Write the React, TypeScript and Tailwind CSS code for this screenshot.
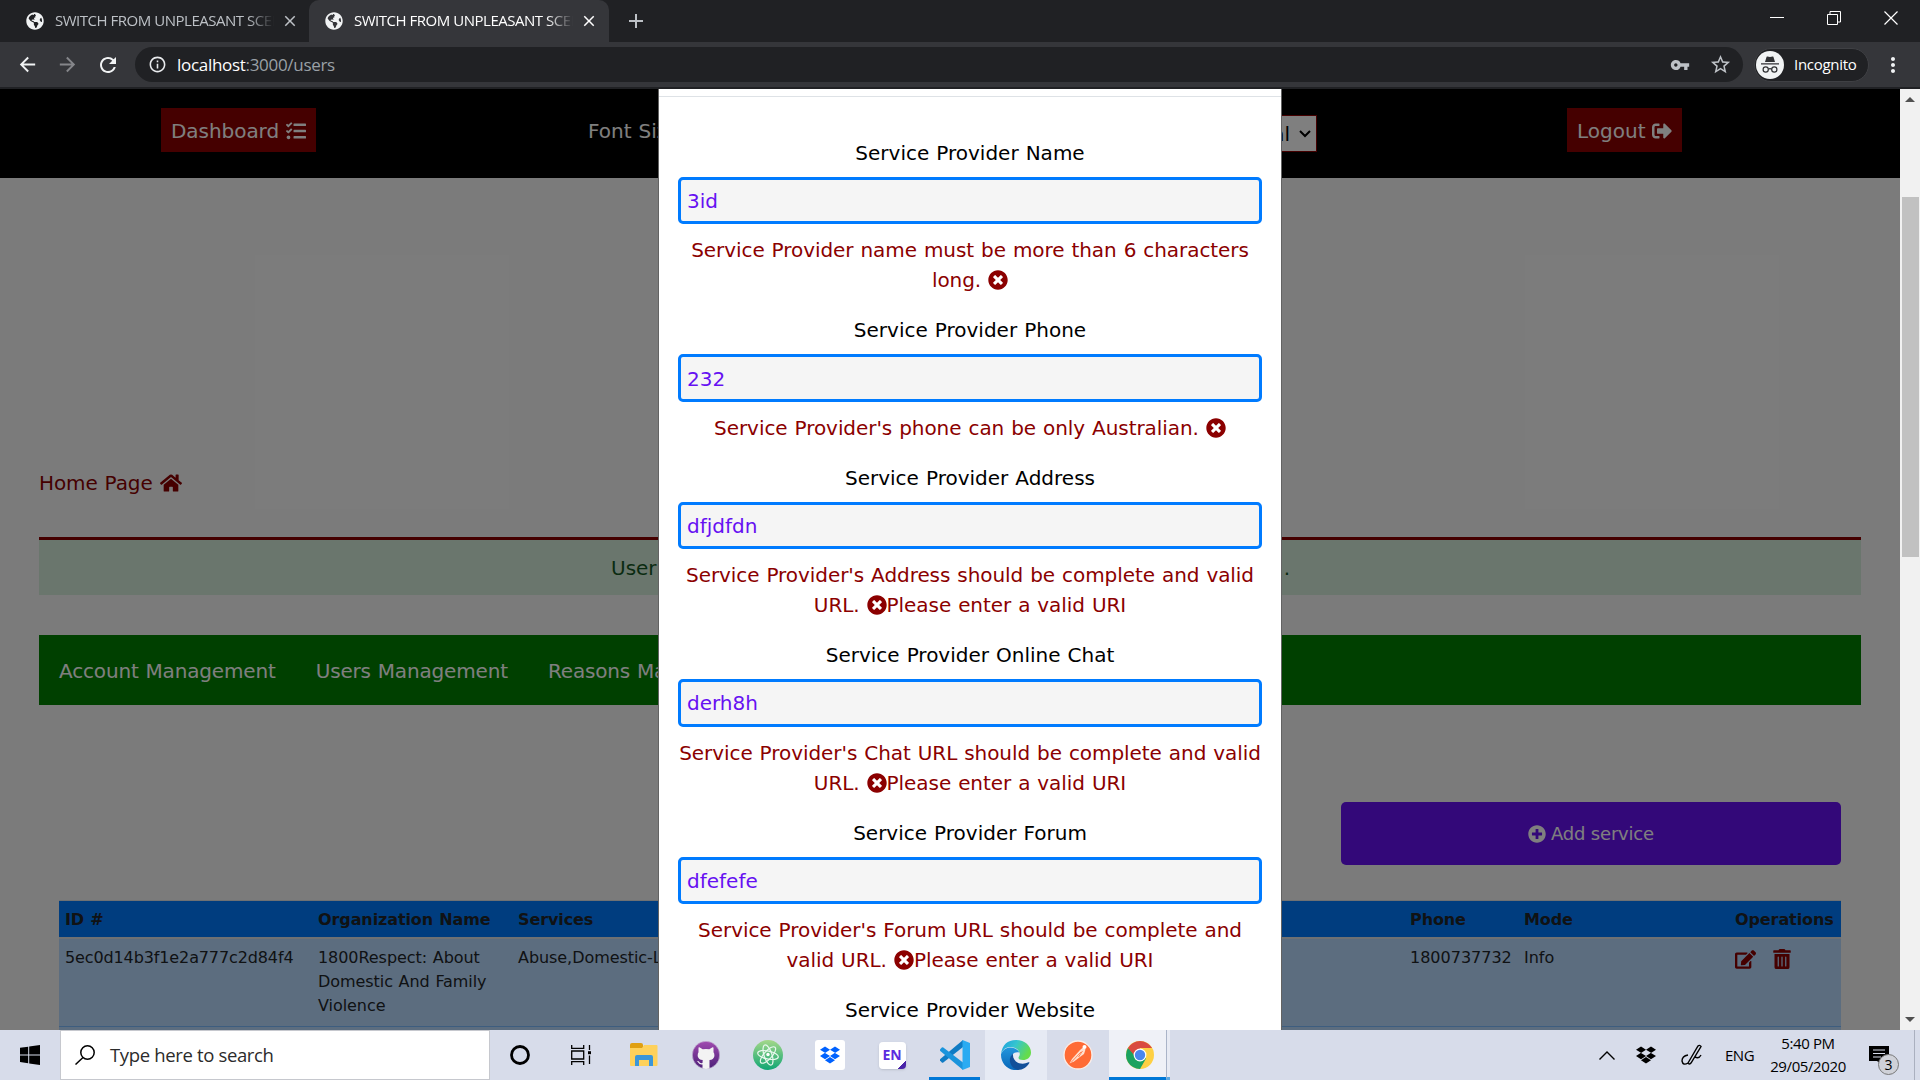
import React from "react";
import {
  FaDropbox,
  FaEdit,
  FaGlobeAmericas,
  FaHome,
  FaPlusCircle,
  FaSignOutAlt,
  FaTasks,
  FaTimesCircle,
  FaTrashAlt,
} from "react-icons/fa";
import {
  MdArrowBack,
  MdArrowForward,
  MdClose,
  MdInfoOutline,
  MdMoreVert,
  MdRefresh,
  MdStarBorder,
  MdVpnKey,
} from "react-icons/md";

const chromeFont = "font-['Open_Sans',sans-serif]";

function Tab({ active }: { active?: boolean }) {
  return (
    <div
      className={
        active
          ? "flex h-[42px] w-[300px] items-center rounded-t-[10px] bg-[#35363a] pl-[16px] text-white"
          : "flex h-[42px] w-[309px] items-center pl-[26px] text-[#bdc1c6]"
      }
    >
      <FaGlobeAmericas className="size-[18px] shrink-0 text-[#f1f3f4]" />
      <span className="ml-[11px] w-[219px] overflow-hidden pb-px whitespace-nowrap text-[15px] tracking-[-0.48px] [mask-image:linear-gradient(to_right,black_88%,transparent)]">
        SWITCH FROM UNPLEASANT SCENES
      </span>
      <MdClose className="ml-[7px] size-[18px] shrink-0" />
    </div>
  );
}

function BrowserChrome() {
  return (
    <header className={`${chromeFont} h-[89px] shrink-0 bg-[#202124]`}>
      <div className="flex h-[42px]">
        <Tab />
        <Tab active />
        <svg viewBox="0 0 16 16" className="mt-[13px] ml-[19px] size-4 stroke-[#bdc1c6] stroke-2">
          <path d="M8 1v14M1 8h14" />
        </svg>
        <div className="mt-[11px] mr-[22px] ml-auto flex gap-[43px]">
          <svg viewBox="0 0 14 14" className="size-[14px] fill-none stroke-white">
            <path d="M0 6.5h14" />
          </svg>
          <svg viewBox="0 0 14 14" className="size-[14px] fill-none stroke-white">
            <path d="M.5 3.5h10v10H.5zM3 3.5v-3h10.500v10.500H11" />
          </svg>
          <svg viewBox="0 0 14 14" className="size-[14px] fill-none stroke-white stroke-[1.2]">
            <path d="M.5.5l13 13M13.500.5l-13 13" />
          </svg>
        </div>
      </div>
      <div className="flex h-[45px] items-center bg-[#35363a] pl-[16px]">
        <MdArrowBack className="size-[23px] text-[#f1f3f4]" />
        <MdArrowForward className="ml-[17px] size-[23px] text-[#85868a]" />
        <MdRefresh className="ml-[17px] size-[24px] text-[#f1f3f4]" />
        <div className="ml-[15px] flex h-[35px] w-[1608px] items-center rounded-full bg-[#202124] pl-[13px]">
          <MdInfoOutline className="size-[19px] text-[#e8eaed]" />
          <span className="ml-[10px] text-[17px] tracking-[-0.3px] text-[#9aa0a6]">
            <span className="text-white">localhost</span>:3000/users
          </span>
          <MdVpnKey className="ml-auto size-[20px] text-[#bdc1c6]" />
          <MdStarBorder className="mr-[11px] ml-[19px] size-[23px] text-[#bdc1c6]" />
        </div>
        <div className="ml-[11px] flex h-[34px] w-[115px] items-center rounded-full border border-[#3f4044] bg-[#202124] pl-[1px] text-white">
          <svg viewBox="0 0 28 28" className="size-7">
            <circle cx="14" cy="14" r="14" fill="#f1f3f4" />
            <path d="M9 11l1.600-5.200q.2-.5.800-.3L14 6l2.600-.5q.600-.2.800.3L19 11zM5 12.200h18v1.300H5z" fill="#303134" />
            <path d="M12.300 18.200q1.700-1 3.400 0" fill="none" stroke="#303134" strokeWidth="1.200" />
            <circle cx="9.700" cy="18.500" r="2.600" fill="none" stroke="#303134" strokeWidth="1.200" />
            <circle cx="18.300" cy="18.500" r="2.600" fill="none" stroke="#303134" strokeWidth="1.200" />
          </svg>
          <span className="ml-[10px] text-[15px] tracking-[-0.3px]">Incognito</span>
        </div>
        <MdMoreVert className="ml-[12px] size-6 text-[#f1f3f4]" />
      </div>
    </header>
  );
}

function UsersPage() {
  return (
    <div className="h-full w-full bg-[#f7f7f7]">
      <nav className="flex h-[89px] bg-black text-white">
        <a className="mt-[19px] ml-[161px] flex h-[44px] w-[155px] items-center bg-[#8b0000] pt-px pl-[10px] tracking-[-0.05px]">
          Dashboard <FaTasks className="ml-[7px] size-[20px]" />
        </a>
        <span className="mt-[27px] ml-[272px] w-[200px]">Font Size</span>
        <div className="mt-[26px] ml-[369px] flex h-[37px] w-[160px] items-center justify-end border border-[#8b0000] bg-white pr-[5px] text-black">
          Normal
          <svg viewBox="0 0 12 8" className="ml-[9px] h-2 w-3 fill-none stroke-black stroke-2">
            <path d="M1 1l5 5 5-5" />
          </svg>
        </div>
        <a className="mt-[19px] ml-[250px] flex h-[44px] w-[115px] items-center bg-[#8b0000] pt-px pl-[10px]">
          Logout <FaSignOutAlt className="ml-[7px] size-[20px]" />
        </a>
      </nav>
      <main className="px-[39px]">
        <a className="flex h-[359px] items-end pb-[39px] text-[#8b0000]">
          <span className="flex items-center leading-[30px] tracking-[-0.1px]">
            Home Page <FaHome className="ml-[7px] size-[22px]" />
          </span>
        </a>
        <div className="flex h-[58px] justify-between border-t-[3px] border-[#8b0000] bg-[#d4edda] pt-[13px] pr-[571px] pl-[572px] text-[#155724]">
          <span>User</span>
          <span>.</span>
        </div>
        <div className="mt-[40px] flex h-[70px] items-center gap-[40px] bg-[#008000] pt-[2px] pl-[20px] tracking-[-0.16px] text-white">
          <span>Account Management</span>
          <span>Users Management</span>
          <span>Reasons Management</span>
        </div>
        <div className="px-[20px]">
          <button className="mt-[97px] ml-auto flex h-[63px] w-[500px] items-center justify-center rounded-[5px] bg-[#6610f2] text-[18px] tracking-[-0.2px] text-white">
            <FaPlusCircle className="mr-[5px] size-[18px]" /> Add service
          </button>
          <table className="mt-[35px] w-full table-fixed border-collapse text-left text-[16px] leading-6 text-[#212529]">
            <colgroup>
              <col className="w-[253px]" />
              <col className="w-[200px]" />
              <col className="w-[892px]" />
              <col className="w-[114px]" />
              <col className="w-[211px]" />
              <col />
            </colgroup>
            <thead>
              <tr className="h-[37px] border-t border-b-2 border-t-[#dee2e6] border-b-[#dee2e6] bg-[#007bff] tracking-[-0.1px]">
                <th className="pt-[2px] pl-[6px]">ID #</th>
                <th className="pt-[2px] pl-[6px]">Organization Name</th>
                <th className="pt-[2px] pl-[6px]">Services</th>
                <th className="pt-[2px] pl-[6px]">Phone</th>
                <th className="pt-[2px] pl-[6px]">Mode</th>
                <th className="pt-[2px] pl-[6px]">Operations</th>
              </tr>
            </thead>
            <tbody className="align-top">
              <tr className="h-[89px] border-b border-[#7abaff] bg-[#b8daff]">
                <td className="pt-[7px] pl-[6px] tracking-[-0.12px]">5ec0d14b3f1e2a777c2d84f4</td>
                <td className="pt-[7px] pl-[6px] tracking-[-0.06px]">
                  1800Respect: About Domestic And Family Violence
                </td>
                <td className="pt-[7px] pl-[6px] tracking-[-0.06px]">Abuse,Domestic-Legal</td>
                <td className="pt-[7px] pl-[6px]">1800737732</td>
                <td className="pt-[7px] pl-[6px]">Info</td>
                <td className="pt-[10px] pl-[6px]">
                  <span className="flex gap-[16px] text-[#8b0000]">
                    <FaEdit className="size-[21px]" />
                    <FaTrashAlt className="size-[20px]" />
                  </span>
                </td>
              </tr>
              <tr className="h-[40px] bg-[#b8daff]">
                <td colSpan={6} />
              </tr>
            </tbody>
          </table>
        </div>
      </main>
    </div>
  );
}

const fields = [
  { label: "Service Provider Name", value: "3id", lines: ["Service Provider name must be more than 6 characters", "long. "], tail: "" },
  { label: "Service Provider Phone", value: "232", lines: ["Service Provider's phone can be only Australian. "], tail: "" },
  { label: "Service Provider Address", value: "dfjdfdn", lines: ["Service Provider's Address should be complete and valid", "URL. "], tail: "Please enter a valid URI" },
  { label: "Service Provider Online Chat", value: "derh8h", lines: ["Service Provider's Chat URL should be complete and valid", "URL. "], tail: "Please enter a valid URI" },
  { label: "Service Provider Forum", value: "dfefefe", lines: ["Service Provider's Forum URL should be complete and", "valid URL. "], tail: "Please enter a valid URI" },
];

function ServiceModal() {
  return (
    <div className="h-full w-[624px] overflow-hidden border-x border-[#636363] bg-white text-black">
      <div className="h-[8px] border-b border-[#dee2e6]" />
      <div className="px-[19px] pt-[41px] text-center">
        {fields.map((f) => (
          <div key={f.label} className="mb-[20px]">
            <div className="h-[30px]">{f.label}</div>
            <div className="mt-[9px] flex h-[47.4px] items-center rounded-[5px] border-[3px] border-[#007bff] bg-[#f5f5f5] px-[6px] pt-px text-[#6610f2]">
              {f.value}
            </div>
            <div className="mt-[11px] text-[#8b0000]">
              {f.lines.map((line, i) => (
                <div
                  key={line}
                  className="flex h-[30px] items-center justify-center tracking-[-0.06px] whitespace-pre"
                >
                  {line}
                  {i === f.lines.length - 1 && <FaTimesCircle className="size-[20px]" />}
                  {i === f.lines.length - 1 && f.tail}
                </div>
              ))}
            </div>
          </div>
        ))}
        <div className="h-[30px]">Service Provider Website</div>
      </div>
    </div>
  );
}

function Scrollbar() {
  return (
    <div className="flex w-[20px] shrink-0 flex-col items-center justify-between bg-[#f1f1f1] py-[8px]">
      <div className="size-0 border-x-[5px] border-b-[5px] border-x-transparent border-b-[#505050]" />
      <div className="-mt-[366px] h-[360px] w-[17px] bg-[#c1c1c1]" />
      <div className="size-0 border-x-[5px] border-t-[5px] border-x-transparent border-t-[#505050]" />
    </div>
  );
}

function Slot({ className = "", children }: { className?: string; children: React.ReactNode }) {
  return <div className={`flex h-full w-[62px] items-center justify-center ${className}`}>{children}</div>;
}

function Taskbar() {
  return (
    <footer className={`${chromeFont} flex h-[50px] shrink-0 bg-[#d7dcea] text-black`}>
      <div className="flex w-[60px] items-center justify-center">
        <svg viewBox="0 0 20 20" className="size-5">
          <path d="M0 2.800l8.200-1.100v7.700H0zM9.200 1.500L20 0v9.400H9.200zM0 10.400h8.200v7.800L0 17zM9.200 10.400H20V20L9.200 18.400z" />
        </svg>
      </div>
      <div className="flex w-[430px] items-center border border-[#c6c8ce] bg-white pl-[14px] text-[#2b2b2b]">
        <svg viewBox="0 0 20 20" className="size-5 fill-none stroke-black stroke-[1.5]">
          <circle cx="12.500" cy="7.500" r="6.700" />
          <path d="M8 12.500L.5 19.500" />
        </svg>
        <span className="ml-[15px] text-[18.500px] tracking-[-0.35px]">Type here to search</span>
      </div>
      <Slot className="pr-[2px]">
        <svg viewBox="0 0 20 20" className="size-5">
          <circle cx="10" cy="10" r="8.500" fill="none" stroke="#000" strokeWidth="2.800" />
        </svg>
      </Slot>
      <Slot className="pr-[4px]">
        <svg viewBox="0 0 20 20" className="size-5 fill-none stroke-black stroke-[1.3]">
          <path d="M.7 0v3.300h12V0M.7 20v-3.300h12V20M.7 6h12v8h-12zM18.500 0v5M18.500 10.500V19" />
          <path d="M17 6.200h3v3h-3z" fill="#000" stroke="none" />
        </svg>
      </Slot>
      <Slot className="-ml-[1px]">
        <svg viewBox="0 0 28 24" className="h-6 w-7">
          <path d="M0 2Q0 0 2 0h9q2 0 2 2v4H0z" fill="#e0a012" />
          <path d="M0 5h12l2-3h12.500q1 0 1 1v19q0 1-1 1H1q-1 0-1-1z" fill="#fed15b" />
          <path d="M5 23V14q0-2 2-2h14q2 0 2 2v9h-4v-6H9v6z" fill="#3b96d9" />
        </svg>
      </Slot>
      <Slot>
        <svg viewBox="0 0 28 28" className="size-7">
          <defs>
            <linearGradient id="gh" x2="0" y2="1">
              <stop stopColor="#a04bb0" />
              <stop offset="1" stopColor="#4c1f78" />
            </linearGradient>
          </defs>
          <circle cx="14" cy="14" r="13.700" fill="url(#gh)" stroke="#c9bfd6" strokeWidth=".6" />
          <path
            d="M6.500 7q0-1 .9-.7l3.300 1.900q3.300-.6 6.600 0l3.300-1.900q.9-.3.900.7v4.200q1.200 1.600.8 4.200-.7 3-4.800 3.600V27.500q-3.500.800-7 0v-4q-3 .5-4.300-2-.7-1-1.500-1.400 2-.3 3 1.400.9 1 2.800.6l.2-3Q6.500 18.500 5.800 15.500q-.4-2.600.7-4.200z"
            fill="#f3f3f3"
          />
        </svg>
      </Slot>
      <Slot>
        <svg viewBox="0 0 30 30" className="size-[30px]">
          <defs>
            <linearGradient id="atom" x2="0" y2="1">
              <stop stopColor="#a5d88a" />
              <stop offset="1" stopColor="#0fa673" />
            </linearGradient>
          </defs>
          <circle cx="15" cy="15" r="15" fill="url(#atom)" />
          <g fill="none" stroke="#e9f8ee" strokeWidth="1.200">
            <ellipse cx="15" cy="15" rx="10.500" ry="4" transform="rotate(12 15 15)" />
            <ellipse cx="15" cy="15" rx="10.500" ry="4" transform="rotate(72 15 15)" />
            <ellipse cx="15" cy="15" rx="10.500" ry="4" transform="rotate(132 15 15)" />
          </g>
          <circle cx="15" cy="14.500" r="1.700" fill="#fff" />
        </svg>
      </Slot>
      <Slot>
        <div className="flex size-[30px] items-center justify-center rounded-[3px] bg-white">
          <FaDropbox className="size-[20px] text-[#0062ff]" />
        </div>
      </Slot>
      <Slot>
        <div className="flex size-[27px] items-center justify-center overflow-hidden rounded-[4px] bg-[linear-gradient(135deg,white_84%,#4a25a8_85%)] pb-[2px] font-['Noto_Sans',sans-serif] text-[14px] font-bold text-[#5b2be0] shadow-sm">
          EN
        </div>
      </Slot>
      <Slot className="mr-[5px] ml-[6px] !w-[51px] border-b-[3px] border-[#0078d7] bg-clip-padding pt-[3px]">
        <svg viewBox="0 0 30 30" className="size-[30px]">
          <path d="M0 20.500l1.800 1.900q.7.600 1.500 0L23 7V0L.3 19q-.6.800-.3 1.500z" fill="#0f7bc4" />
          <path d="M0 9.500l1.800-1.900q.7-.6 1.500 0L23 22.500V30L.3 11q-.6-.8-.3-1.500z" fill="#1a94dc" />
          <path d="M22.500 0L30 3v24l-7.500 3z" fill="#2aabf2" />
        </svg>
      </Slot>
      <Slot className="bg-[#e6eaf4]">
        <svg viewBox="0 0 30 30" className="size-[30px]">
          <defs>
            <linearGradient id="edgeTop" x2="1" y2=".4">
              <stop stopColor="#1b9de2" />
              <stop offset=".5" stopColor="#35c5cf" />
              <stop offset="1" stopColor="#65dc4b" />
            </linearGradient>
            <linearGradient id="edgeSide" x2="0" y2="1">
              <stop stopColor="#2296dd" />
              <stop offset="1" stopColor="#0866b8" />
            </linearGradient>
          </defs>
          <path d="M0 14Q2 0 15 0c9 0 15 6 15 12.500 0 5-4 7.500-8 7.500-3 0-4.500-1-4.500-2.300 0-.9 1.300-1.500 1.300-3.600C18.800 10 14 7 9 7Q3 7 0 14z" fill="url(#edgeTop)" />
          <path d="M0 14Q3 7.500 9 7.500c4 0 8 2 9.400 5C13 11 9.500 15 10 20c.5 5 4 8.500 8 9.700C8 32 0 24 0 15z" fill="url(#edgeSide)" />
          <path d="M12 13.500C6 19 9 28 17 30c5 0 9-3 11.300-7 .3-.8-.3-1-.8-.7C20 26 11 22 12 13.500z" fill="#124f99" />
        </svg>
      </Slot>
      <Slot>
        <svg viewBox="0 0 30 30" className="size-[30px]">
          <circle cx="15" cy="15" r="14" fill="#ff6b35" stroke="#fbeee8" strokeWidth="1.300" />
          <path d="M6.500 23.500L9 19l8-9 3-2.500 2.500 2-1.500 4.500-4 3-6 4.500z" fill="#ffe0d0" />
          <circle cx="21.500" cy="7" r="2" fill="#fff" />
          <path d="M8 22.500L18 12M15.500 17l4-6" stroke="#ff6b35" strokeWidth=".8" />
        </svg>
      </Slot>
      <div className="flex h-full w-[57px] items-center justify-center border-b-[3px] border-[#0078d7] bg-[#eff1f7] bg-clip-padding pt-[3px] pl-[4px]">
        <svg viewBox="0 0 28 28" className="size-7">
          <circle cx="14" cy="14" r="14" fill="#fed043" />
          <path d="M14 14L1.900 7A14 14 0 0 0 14 28l6-10.500z" fill="#1aa260" />
          <path d="M14 14h-6L1.900 7A14 14 0 0 1 26.100 7H14z" fill="#d94b40" />
          <circle cx="14" cy="14" r="6.400" fill="#fff" />
          <circle cx="14" cy="14" r="5.200" fill="#4a86ee" />
        </svg>
      </div>
      <div className="w-[4px] border-b-[3px] border-l border-b-[#5ba8e2] border-l-[#aab4c8] bg-[#e8ebf4] bg-clip-padding" />
      <div className="ml-auto flex h-full items-center">
        <svg viewBox="0 0 16 9" className="mr-[21px] h-[9px] w-4 fill-none stroke-black stroke-[1.4]">
          <path d="M.5 8.500L8 1l7.500 7.500" />
        </svg>
        <FaDropbox className="mr-[25px] size-[20px]" />
        <svg viewBox="0 0 22 22" className="mr-[22px] size-[22px] fill-none stroke-black stroke-[1.400]">
          <path d="M7 19L17 2q1.500-1.500 3 .5L10 19q-2 2-3 0zM7 11q-6 1-6 6 1 5 6 2M14 13q4 2 6-2" />
        </svg>
        <span className="w-[30px] text-[15px] tracking-[-0.5px]">ENG</span>
        <div className="w-[106px] text-center text-[15px] leading-[23px] tracking-[-0.4px]">
          <div>5:40 PM</div>
          <div>29/05/2020</div>
        </div>
        <div className="relative ml-[8px] h-[22px] w-[45px]">
          <svg viewBox="0 0 20 22" className="h-[22px] w-5">
            <path d="M0 2h20v15h-8v3l-4-3H0z" />
            <path d="M4 6h12M4 9.500h12M4 13h8" stroke="#d7dcea" strokeWidth="1.200" />
          </svg>
          <span className="absolute top-[10px] left-[9px] flex size-[21px] items-center justify-center rounded-full border border-[#777] bg-[#cfd1d8] text-[14px]">
            3
          </span>
        </div>
        <div className="h-full w-[6px] border-l border-[#aab0bf]" />
      </div>
    </footer>
  );
}

export default function App() {
  return (
    <div className="flex h-[1080px] w-[1920px] flex-col overflow-hidden">
      <BrowserChrome />
      <div className="flex h-[941px] font-['DejaVu_Sans',sans-serif] text-[20px] leading-[30px] [word-spacing:0.034em]">
        <div className="relative min-w-0 flex-1 overflow-hidden">
          <UsersPage />
          <div className="absolute inset-0 bg-black/50 pl-[658px]">
            <ServiceModal />
          </div>
        </div>
        <Scrollbar />
      </div>
      <Taskbar />
    </div>
  );
}
